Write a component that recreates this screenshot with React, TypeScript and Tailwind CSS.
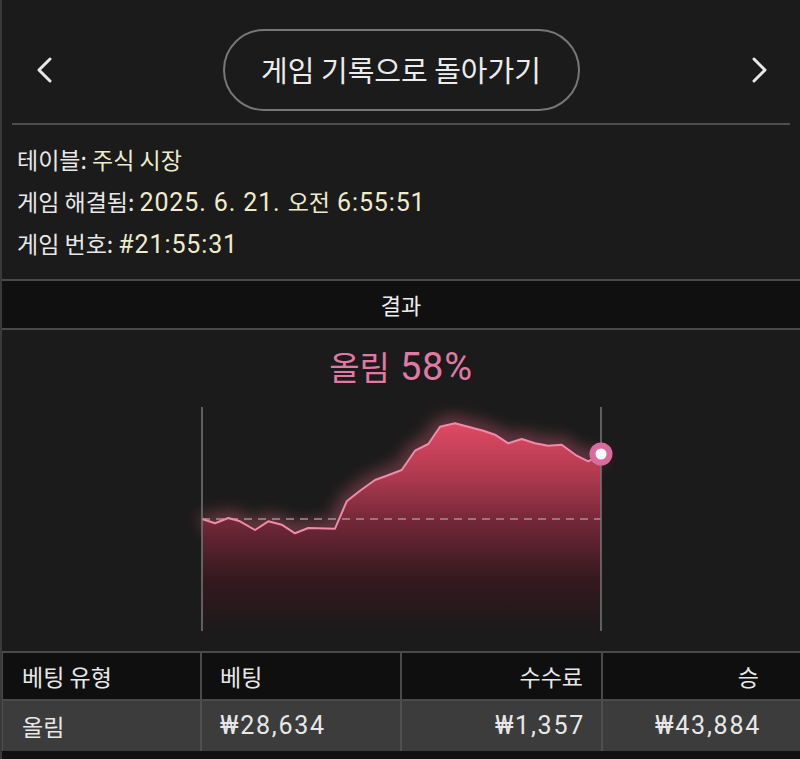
const font = { fontFamily: '"Noto Sans CJK KR", "Noto Sans", sans-serif' };
const latin = { fontFamily: 'Roboto, "Noto Sans CJK KR", sans-serif' };

const points: [number, number][] = [
  [202, 520], [215, 524.3], [228.3, 519], [240, 522.3], [255, 531], [268.3, 522.3],
  [281.7, 525.7], [295, 534.3], [308.3, 529], [335, 529.7], [346.7, 502.3], [360, 491.7],
  [375, 481], [386.7, 476.7], [401.7, 471], [415, 451.7], [428.3, 445], [440, 427.7],
  [455, 424.3], [470, 428.3], [483.3, 431.7], [495, 435.7], [508.3, 444.3], [521.7, 440],
  [535, 444.3], [548.3, 446.7], [561.7, 445.7], [576.7, 456.7], [588.3, 462.3], [601, 455],
];

function Chevron({ dir }: { dir: 'left' | 'right' }) {
  return (
    <svg width="18" height="26" viewBox="0 0 18 26" fill="none">
      <polyline
        points={dir === 'left' ? '14,2 3,13 14,24' : '4,2 15,13 4,24'}
        stroke="#e8e8e8"
        strokeWidth={3}
        strokeLinecap="round"
        strokeLinejoin="round"
      />
    </svg>
  );
}

function Chart() {
  const line = points.map((p, i) => `${i === 0 ? 'M' : 'L'}${p[0]} ${p[1]}`).join(' ');
  const area = `${line} L601 632 L202 632 Z`;
  return (
    <svg width="798" height="244" viewBox="2 400 798 244" className="block">
      <defs>
        <linearGradient id="fill" gradientUnits="userSpaceOnUse" x1="0" y1="424" x2="0" y2="632">
          <stop offset="0" stopColor="#e04a62" />
          <stop offset="0.25" stopColor="#b03a50" />
          <stop offset="0.5" stopColor="#6c2635" />
          <stop offset="0.75" stopColor="#34191f" />
          <stop offset="1" stopColor="#1c191a" />
        </linearGradient>
        <filter id="glow" x="-20%" y="-60%" width="140%" height="220%">
          <feGaussianBlur stdDeviation="8" />
        </filter>
      </defs>
      <path d={line} stroke="#ff6f8d" strokeWidth={14} fill="none" opacity={0.4} filter="url(#glow)" />
      <path d={area} fill="url(#fill)" />
      <line x1="202" y1="520" x2="601" y2="520" stroke="#a58e96" strokeWidth={1.5} strokeDasharray="8 6" />
      <path d={line} stroke="#f08aab" strokeWidth={2} fill="none" strokeLinejoin="round" />
      <line x1="202" y1="408" x2="202" y2="632" stroke="#777" strokeWidth={1.5} />
      <line x1="601" y1="408" x2="601" y2="632" stroke="#777" strokeWidth={1.5} />
      <circle cx="601" cy="455" r="11.5" fill="#da6b9c" />
      <circle cx="601" cy="455" r="5.5" fill="#ffffff" />
    </svg>
  );
}

function Num({ children }: { children: React.ReactNode }) {
  return (
    <span style={latin} className="text-[25px] tracking-[0.07em]">
      {children}
    </span>
  );
}

export default function App() {
  return (
    <div style={font} className="w-[800px] h-[759px] overflow-hidden bg-[#1b1b1b] border-l-2 border-[#3a3a3a] flex flex-col text-[#e8e8e8]">
      {/* top bar */}
      <div className="mx-[10px] pt-[29px] pb-[12px] border-b-2 border-[#4e4e4e] flex items-center justify-between">
        <button className="w-[66px] flex justify-center">
          <Chevron dir="left" />
        </button>
        <button className="h-[82px] w-[357px] rounded-full border-2 border-[#777] text-[29px] text-[#ececec] flex items-center justify-center">
          게임 기록으로 돌아가기
        </button>
        <button className="w-[66px] flex justify-center pl-[4px]">
          <Chevron dir="right" />
        </button>
      </div>

      {/* info */}
      <div className="pl-[15px] pt-[13px] pb-[15px] text-[23px] leading-[42px]">
        <div className="h-[42px] whitespace-nowrap">테이블: <span className="text-[#efebcb]">주식 시장</span></div>
        <div className="h-[42px] whitespace-nowrap">
          게임 해결됨:{' '}
          <span className="text-[#efebcb]">
            <span style={latin} className="text-[25px] tracking-[0.035em]">2025. 6. 21. </span>
            오전
            <span style={latin} className="text-[25px] tracking-[0.035em]"> 6:55:51</span>
          </span>
        </div>
        <div className="h-[42px] whitespace-nowrap">
          게임 번호:{' '}
          <span style={latin} className="text-[#efebcb] text-[25px] tracking-[0.035em]">#21:55:31</span>
        </div>
      </div>

      {/* results header */}
      <div className="h-[51px] bg-[#101010] border-y-2 border-[#4a4a4a] flex items-center justify-center text-[22px] text-[#eeeeee]">
        결과
      </div>

      <div className="mt-[17px] h-[40px] flex items-center justify-center text-[#e07aa2]">
        <span className="text-[33px]">올림</span>
        <span style={latin} className="text-[38px] tracking-[0.02em] ml-[10px]">58%</span>
      </div>

      <div className="mt-[12px]">
        <Chart />
      </div>

      {/* table */}
      <div className="mt-[8px] grid grid-cols-[200px_200px_201px_1fr] border-t-2 border-[#4a4a4a] text-[23px]">
        <div className="h-[48px] bg-[#0f0f0f] border-r-2 border-b-2 border-l border-[#4a4a4a] flex items-center pl-[19px]">베팅 유형</div>
        <div className="h-[48px] bg-[#0f0f0f] border-r-2 border-b-2 border-[#4a4a4a] flex items-center pl-[18px]">베팅</div>
        <div className="h-[48px] bg-[#0f0f0f] border-r-2 border-b-2 border-[#4a4a4a] flex items-center justify-end pr-[18px]">수수료</div>
        <div className="h-[48px] bg-[#0f0f0f] border-b-2 border-[#4a4a4a] flex items-center justify-end pr-[41px]">승</div>

        <div className="h-[50px] bg-[#3c3c3c] border-r-2 border-l border-[#4f4f4f] flex items-center pl-[19px]">올림</div>
        <div className="h-[50px] bg-[#3c3c3c] border-r-2 border-[#4f4f4f] flex items-center pl-[18px]"><Num>₩28,634</Num></div>
        <div className="h-[50px] bg-[#3c3c3c] border-r-2 border-[#4f4f4f] flex items-center justify-end pr-[16px]"><Num>₩1,357</Num></div>
        <div className="h-[50px] bg-[#3c3c3c] flex items-center justify-end pr-[39px]"><Num>₩43,884</Num></div>
      </div>
      <div className="flex-1 bg-[#111111]" />
    </div>
  );
}
